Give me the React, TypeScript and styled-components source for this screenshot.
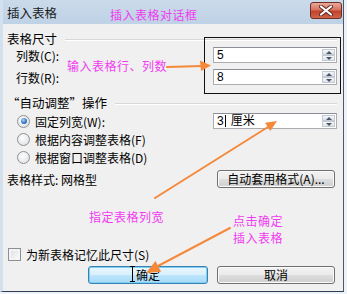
import React from 'react';
import styled, { createGlobalStyle } from 'styled-components';

const FONT = `"Noto Sans CJK SC", "Liberation Sans", sans-serif`;

const GlobalStyle = createGlobalStyle`
  html, body {
    margin: 0;
    padding: 0;
    background: #eef2f7;
  }
  body {
    font-family: ${FONT};
  }
`;

const Window = styled.div`
  position: relative;
  width: 340px;
  height: 291px;
  border-left: 3px solid #d3e0ee;
  border-right: 1px solid #4d5866;
  border-bottom: 1px solid #2c3e5a;
  background: #f0f0f0;
  font-family: ${FONT};
  font-size: 12px;
  color: #000;
  display: flex;
  flex-direction: column;
  overflow: hidden;
`;

const TitleBar = styled.div`
  height: 24px;
  margin-left: -3px;
  padding-left: 7px;
  background: linear-gradient(#cbdaea, #bfd2e6);
  display: flex;
  align-items: center;
  justify-content: space-between;
  font-size: 12.5px;
  color: #1a1a1a;
`;

const CloseButton = styled.div`
  width: 30px;
  height: 15px;
  margin-right: 1px;
  margin-top: -3px;
  border: 1px solid #6e2e25;
  border-radius: 3px;
  background: linear-gradient(#e9a99c 0%, #d7735f 45%, #c2412b 55%, #d0644a 100%);
  display: flex;
  align-items: center;
  justify-content: center;
`;

const Body = styled.div`
  flex: 1;
  padding: 8px 6px 0 4px;
  display: flex;
  flex-direction: column;
`;

const SectionHeader = styled.div<{ $mt?: number }>`
  height: 14px;
  line-height: 14px;
  margin-top: ${p => p.$mt ?? 0}px;
  display: flex;
  align-items: center;
  font-size: 12.5px;
  &::after {
    content: '';
    flex: 1;
    height: 1px;
    margin-left: 8px;
    background: #d8d8d8;
    box-shadow: 0 1px 0 #fff;
  }
`;

const Row = styled.div<{ $h?: number; $mt?: number }>`
  height: ${p => p.$h ?? 16}px;
  margin-top: ${p => p.$mt ?? 0}px;
  display: flex;
  align-items: center;
  justify-content: space-between;
`;

const Label = styled.span<{ $indent?: number }>`
  padding-left: ${p => p.$indent ?? 0}px;
  white-space: nowrap;
`;

const Field = styled.div`
  width: 122px;
  height: 14px;
  border: 1px solid #abadb3;
  border-top-color: #8a8e96;
  background: #fff;
  display: flex;
  align-items: stretch;
`;

const FieldText = styled.div`
  flex: 1;
  padding-left: 3px;
  line-height: 14px;
  font-family: "Liberation Sans", ${FONT};
  display: flex;
  align-items: center;
`;

const Caret = styled.span`
  display: inline-block;
  width: 1px;
  height: 12px;
  background: #000;
  margin: 0 5px 0 1px;
`;

const Spin = styled.div`
  width: 13px;
  display: flex;
  flex-direction: column;
  padding: 1px 1px 1px 0;
`;

const SpinHalf = styled.div<{ $down?: boolean }>`
  flex: 1;
  border: 1px solid #c3cad3;
  background: linear-gradient(#f4f6f9, #dde3ea);
  display: flex;
  align-items: center;
  justify-content: center;
  &::before {
    content: '';
    border-left: 3px solid transparent;
    border-right: 3px solid transparent;
    ${p => (p.$down ? 'border-top: 3px solid #4a5568;' : 'border-bottom: 3px solid #4a5568;')}
  }
`;

const OptionLabel = styled.label`
  display: flex;
  align-items: center;
  gap: 5px;
  padding-left: 10px;
  white-space: nowrap;
`;

const Radio = styled.span<{ $checked?: boolean }>`
  width: 11px;
  height: 11px;
  border-radius: 50%;
  border: 1px solid #8c8f94;
  background: radial-gradient(circle at 40% 35%, #ffffff, #d9dbde);
  display: flex;
  align-items: center;
  justify-content: center;
  &::after {
    content: '';
    display: ${p => (p.$checked ? 'block' : 'none')};
    width: 6px;
    height: 6px;
    border-radius: 50%;
    background: radial-gradient(circle at 40% 35%, #a6d4f7, #1f63b4 70%);
  }
`;

const CheckBox = styled.span`
  width: 11px;
  height: 11px;
  border: 1px solid #8c8f94;
  background: linear-gradient(135deg, #d8dadd, #ffffff);
  box-shadow: inset 0 0 0 2px #f4f4f4;
`;

const Button = styled.div<{ $w: number; $primary?: boolean }>`
  width: ${p => p.$w}px;
  height: 16px;
  border: 1px solid ${p => (p.$primary ? '#3c7fb1' : '#707070')};
  border-radius: 3px;
  background: ${p =>
    p.$primary
      ? 'linear-gradient(#eaf6fd 0%, #d9f0fc 50%, #bee6fd 51%, #a7d9f5 100%)'
      : 'linear-gradient(#f2f2f2 0%, #ebebeb 50%, #dddddd 51%, #cfcfcf 100%)'};
  box-shadow: inset 0 0 0 1px ${p => (p.$primary ? '#7ad0f5' : '#fbfbfb')};
  display: flex;
  align-items: center;
  justify-content: center;
  line-height: 16px;
  white-space: nowrap;
`;

const ButtonRow = styled.div<{ $mt?: number }>`
  display: flex;
  justify-content: flex-end;
  gap: 9px;
  margin-top: ${p => p.$mt ?? 4}px;
  padding-right: 2px;
`;

const CheckRow = styled.label`
  height: 16px;
  margin-top: 58px;
  display: flex;
  align-items: center;
  gap: 5px;
  padding-left: 1px;
`;

/* annotations drawn over the dialog */
const Note = styled.div<{ $x: number; $y: number }>`
  position: absolute;
  left: ${p => p.$x}px;
  top: ${p => p.$y}px;
  color: #f03cf0;
  font-size: 12px;
  line-height: 17px;
  letter-spacing: 0.5px;
  white-space: nowrap;
`;

const Frame = styled.div`
  position: absolute;
  left: 201px;
  top: 37px;
  width: 135px;
  height: 55px;
  border: 1.5px solid #111;
`;

const Overlay = styled.svg`
  position: absolute;
  left: -3px;
  top: 0;
  pointer-events: none;
`;

const Arrows = () => (
  <Overlay width={347} height={294} viewBox="0 0 347 294">
    <g stroke="#f5893a" strokeWidth={2} strokeLinecap="round" fill="#f5893a">
      <line x1={167} y1={67} x2={202} y2={66} />
      <polygon points="211,65.5 200,60.5 201,71" stroke="none" />
      <line x1={155} y1={198} x2={268} y2={127} />
      <polygon points="277,121 270.4,131.1 265,122.7" stroke="none" />
      <line x1={230} y1={228} x2={158} y2={266} />
      <polygon points="146,273 161.1,271.7 155.5,261.1" stroke="none" />
    </g>
    <g stroke="#000" strokeWidth={1} fill="none">
      <line x1={132.5} y1={266} x2={132.5} y2={282} />
      <line x1={130} y1={266.5} x2={135} y2={266.5} />
      <line x1={130} y1={281.5} x2={135} y2={281.5} />
    </g>
  </Overlay>
);

const App: React.FC = () => {
  return (
    <>
      <GlobalStyle />
      <Window>
        <TitleBar>
          <span>插入表格</span>
          <CloseButton>
            <svg width="14" height="11" viewBox="0 0 14 11">
              <path d="M2 1.5 L12 9.5 M12 1.5 L2 9.5" stroke="#5a2a22" strokeWidth="4" strokeLinecap="round" />
              <path d="M2 1.5 L12 9.5 M12 1.5 L2 9.5" stroke="#ffffff" strokeWidth="2.2" strokeLinecap="round" />
            </svg>
          </CloseButton>
        </TitleBar>
        <Body>
          <SectionHeader>表格尺寸</SectionHeader>
          <Row $mt={1}>
            <Label $indent={9}>列数(C):</Label>
            <Field>
              <FieldText>5</FieldText>
              <Spin>
                <SpinHalf />
                <SpinHalf $down />
              </Spin>
            </Field>
          </Row>
          <Row $mt={6}>
            <Label $indent={9}>行数(R):</Label>
            <Field>
              <FieldText>8</FieldText>
              <Spin>
                <SpinHalf />
                <SpinHalf $down />
              </Spin>
            </Field>
          </Row>
          <SectionHeader $mt={11}>“自动调整”操作</SectionHeader>
          <Row $h={18} $mt={2}>
            <OptionLabel>
              <Radio $checked />
              固定列宽(W):
            </OptionLabel>
            <Field>
              <FieldText>
                3<Caret />厘米
              </FieldText>
              <Spin>
                <SpinHalf />
                <SpinHalf $down />
              </Spin>
            </Field>
          </Row>
          <Row $h={18}>
            <OptionLabel>
              <Radio />
              根据内容调整表格(F)
            </OptionLabel>
          </Row>
          <Row $h={18}>
            <OptionLabel>
              <Radio />
              根据窗口调整表格(D)
            </OptionLabel>
          </Row>
          <Row $h={18} $mt={4}>
            <Label>表格样式: 网格型</Label>
            <ButtonRow $mt={0}>
              <Button $w={116}>自动套用格式(A)...</Button>
            </ButtonRow>
          </Row>
          <CheckRow>
            <CheckBox />
            为新表格记忆此尺寸(S)
          </CheckRow>
          <ButtonRow>
            <Button $w={118} $primary>确定</Button>
            <Button $w={116}>取消</Button>
          </ButtonRow>
        </Body>
        <Frame />
        <Note $x={107} $y={6}>插入表格对话框</Note>
        <Note $x={64} $y={57}>输入表格行、列数</Note>
        <Note $x={86} $y={208}>指定表格列宽</Note>
        <Note $x={230} $y={212}>
          点击确定
          <br />
          插入表格
        </Note>
        <Arrows />
      </Window>
    </>
  );
};

export default App;
